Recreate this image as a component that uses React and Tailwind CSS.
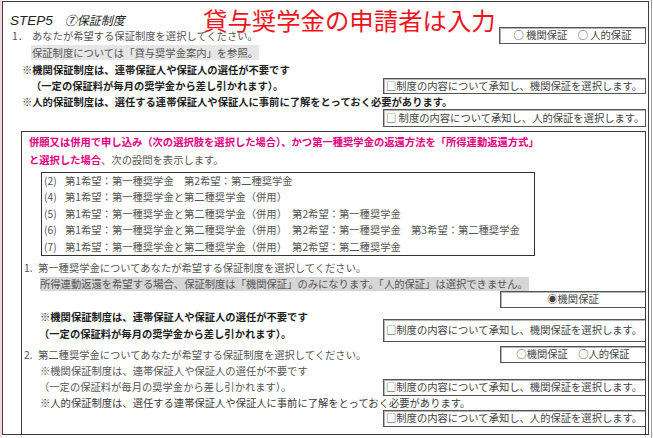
import React from 'react';

const Box = ({ className = '', children }) => (
  <div
    className={`border border-[#555] shadow-[inset_1px_1px_0_#b5b5b5] text-[#444] flex items-center whitespace-nowrap leading-none shrink-0 ${className}`}
  >
    {children}
  </div>
);

const subOptions = [
  ['(2)', '第1希望：第一種奨学金　第2希望：第二種奨学金'],
  ['(4)', '第1希望：第一種奨学金と第二種奨学金（併用）'],
  ['(5)', '第1希望：第一種奨学金と第二種奨学金（併用）　第2希望：第一種奨学金'],
  ['(6)', '第1希望：第一種奨学金と第二種奨学金（併用）　第2希望：第一種奨学金　第3希望：第二種奨学金'],
  ['(7)', '第1希望：第一種奨学金と第二種奨学金（併用）　第2希望：第二種奨学金'],
];

export default function App() {
  return (
    <div className="w-[653px] h-[438px] bg-white flex overflow-hidden font-['Noto_Sans_CJK_JP',sans-serif] text-[10.3px] leading-[12px] text-[#555] whitespace-nowrap">
      {/* pink margin */}
      <div className="w-[2px] h-full bg-[#f3d6e0] shrink-0" />

      {/* outer frame */}
      <div className="w-[647px] h-[434px] mt-px border border-[#3c3c3c] flex flex-col shrink-0">
        {/* title */}
        <div className="h-[25px] flex shrink-0">
          <div className="w-[200px] pl-[7px] pt-[11px] shrink-0">
            <span className="italic font-['Liberation_Sans','Noto_Sans_CJK_JP',sans-serif] text-[13.5px] leading-[15px] text-[#222]">
              STEP5
              <span className="ml-[12px] text-[12px]">⑦保証制度</span>
            </span>
          </div>
          <div className="mt-[9px] text-[24.4px] leading-[18px] text-[#f0141e]">貸与奨学金の申請者は入力</div>
        </div>

        <div className="h-[17px] flex items-center pl-[9px] shrink-0">
          <span className="inline-block w-[20px]">1．</span>
          <span>あなたが希望する保証制度を選択してください。</span>
          <Box className="ml-auto mr-[2px] w-[147px] h-full justify-center">○ 機関保証　○ 人的保証</Box>
        </div>

        <div className="h-[17px] flex items-center pl-[28px] shrink-0">
          <span className="bg-[#e6e6e6] h-[15px] leading-[15px] px-px">保証制度については「貸与奨学金案内」を参照。</span>
        </div>

        <div className="h-[17px] flex items-center pl-[19px] font-bold text-[#1e1e1e] shrink-0">
          ※機関保証制度は、連帯保証人や保証人の選任が不要です
        </div>

        <div className="h-[16px] flex items-center pl-[28px] font-bold text-[#1e1e1e] shrink-0">
          <span>（一定の保証料が毎月の奨学金から差し引かれます）。</span>
          <Box className="ml-auto mr-[2px] w-[263px] h-full pl-[2px] font-normal">□制度の内容について承知し、機関保証を選択します。</Box>
        </div>

        <div className="h-[15px] flex items-center pl-[19px] font-bold text-[#1e1e1e] shrink-0">
          ※人的保証制度は、選任する連帯保証人や保証人に事前に了解をとっておく必要があります。
        </div>

        <div className="h-[18px] flex justify-end pr-[2px] shrink-0">
          <Box className="w-[263px] h-full pl-[2px]">□ 制度の内容について承知し、人的保証を選択します。</Box>
        </div>

        {/* conditional section */}
        <div className="mt-[4px] ml-[18px] mr-[2px] flex-1 border-l border-t border-r border-[#3c3c3c] flex flex-col pt-px overflow-hidden">
          <div className="h-[18px] flex items-center pl-[7px] font-bold text-[#e5007f] shrink-0">
            併願又は併用で申し込み（次の選択肢を選択した場合）、かつ第一種奨学金の返還方法を「所得連動返還方式」
          </div>
          <div className="h-[18px] flex items-center pl-[7px] shrink-0">
            <span className="font-bold text-[#e5007f]">と選択した場合</span>
            <span>、次の設問を表示します。</span>
          </div>

          <div className="mt-[3px] ml-[19px] w-[494px] h-[84px] border border-[#333] pl-[2px] shrink-0">
            {subOptions.map(([no, text]) => (
              <div key={no} className="h-[16.4px] leading-[16.4px] flex">
                <span className="inline-block w-[21px]">{no}</span>
                <span>{text}</span>
              </div>
            ))}
          </div>

          <div className="mt-[3px] h-[18px] flex items-center pl-[2px] shrink-0">
            <span className="inline-block w-[14px]">1.</span>
            <span>第一種奨学金についてあなたが希望する保証制度を選択してください。</span>
          </div>

          <div className="h-[14px] flex pl-[18px] shrink-0">
            <span className="bg-[#d6d6d6] h-full leading-[14px] pr-px">
              所得連動返還を希望する場合、保証制度は「機関保証」のみになります。「人的保証」は選択できません。
            </span>
          </div>

          <div className="h-[17px] flex justify-end shrink-0">
            <Box className="w-[146px] h-full -mr-px justify-center">◉機関保証</Box>
          </div>

          <div className="h-[34px] flex shrink-0">
            <div className="flex flex-col font-bold text-[#1e1e1e]">
              <div className="h-[18px] flex items-center pl-[18px]">※機関保証制度は、連帯保証人や保証人の選任が不要です</div>
              <div className="h-[16px] flex items-center pl-[17px]">（一定の保証料が毎月の奨学金から差し引かれます）。</div>
            </div>
            <Box className="ml-auto self-end w-[263px] h-[23px] -mr-px pl-[2px]">□制度の内容について承知し、機関保証を選択します。</Box>
          </div>

          <div className="mt-[4px] h-[17px] flex items-center pl-[2px] shrink-0">
            <span className="inline-block w-[14px]">2.</span>
            <span>第二種奨学金についてあなたが希望する保証制度を選択してください。</span>
            <Box className="ml-auto w-[146px] h-full -mr-px justify-center">○機関保証　○人的保証</Box>
          </div>

          <div className="h-[15px] flex items-center pl-[18px] shrink-0">
            ※機関保証制度は、連帯保証人や保証人の選任が不要です
          </div>

          <div className="h-[18px] flex items-center pl-[17px] shrink-0">
            <span>（一定の保証料が毎月の奨学金から差し引かれます）。</span>
            <Box className="ml-auto w-[263px] h-[17px] -mr-px pl-[2px]">□制度の内容について承知し、機関保証を選択します。</Box>
          </div>

          <div className="h-[13px] flex items-center pl-[18px] text-[#3a3a3a] shrink-0">
            ※人的保証制度は、選任する連帯保証人や保証人に事前に了解をとっておく必要があります。
          </div>

          <div className="mt-px h-[17px] flex justify-end shrink-0">
            <Box className="w-[263px] h-full -mr-px pl-[2px]">□制度の内容について承知し、人的保証を選択します。</Box>
          </div>
        </div>
      </div>

      {/* page edge on the right */}
      <div className="w-[2px] shrink-0" />
      <div className="w-px h-full bg-[#9a9a9a] shrink-0" />
    </div>
  );
}
